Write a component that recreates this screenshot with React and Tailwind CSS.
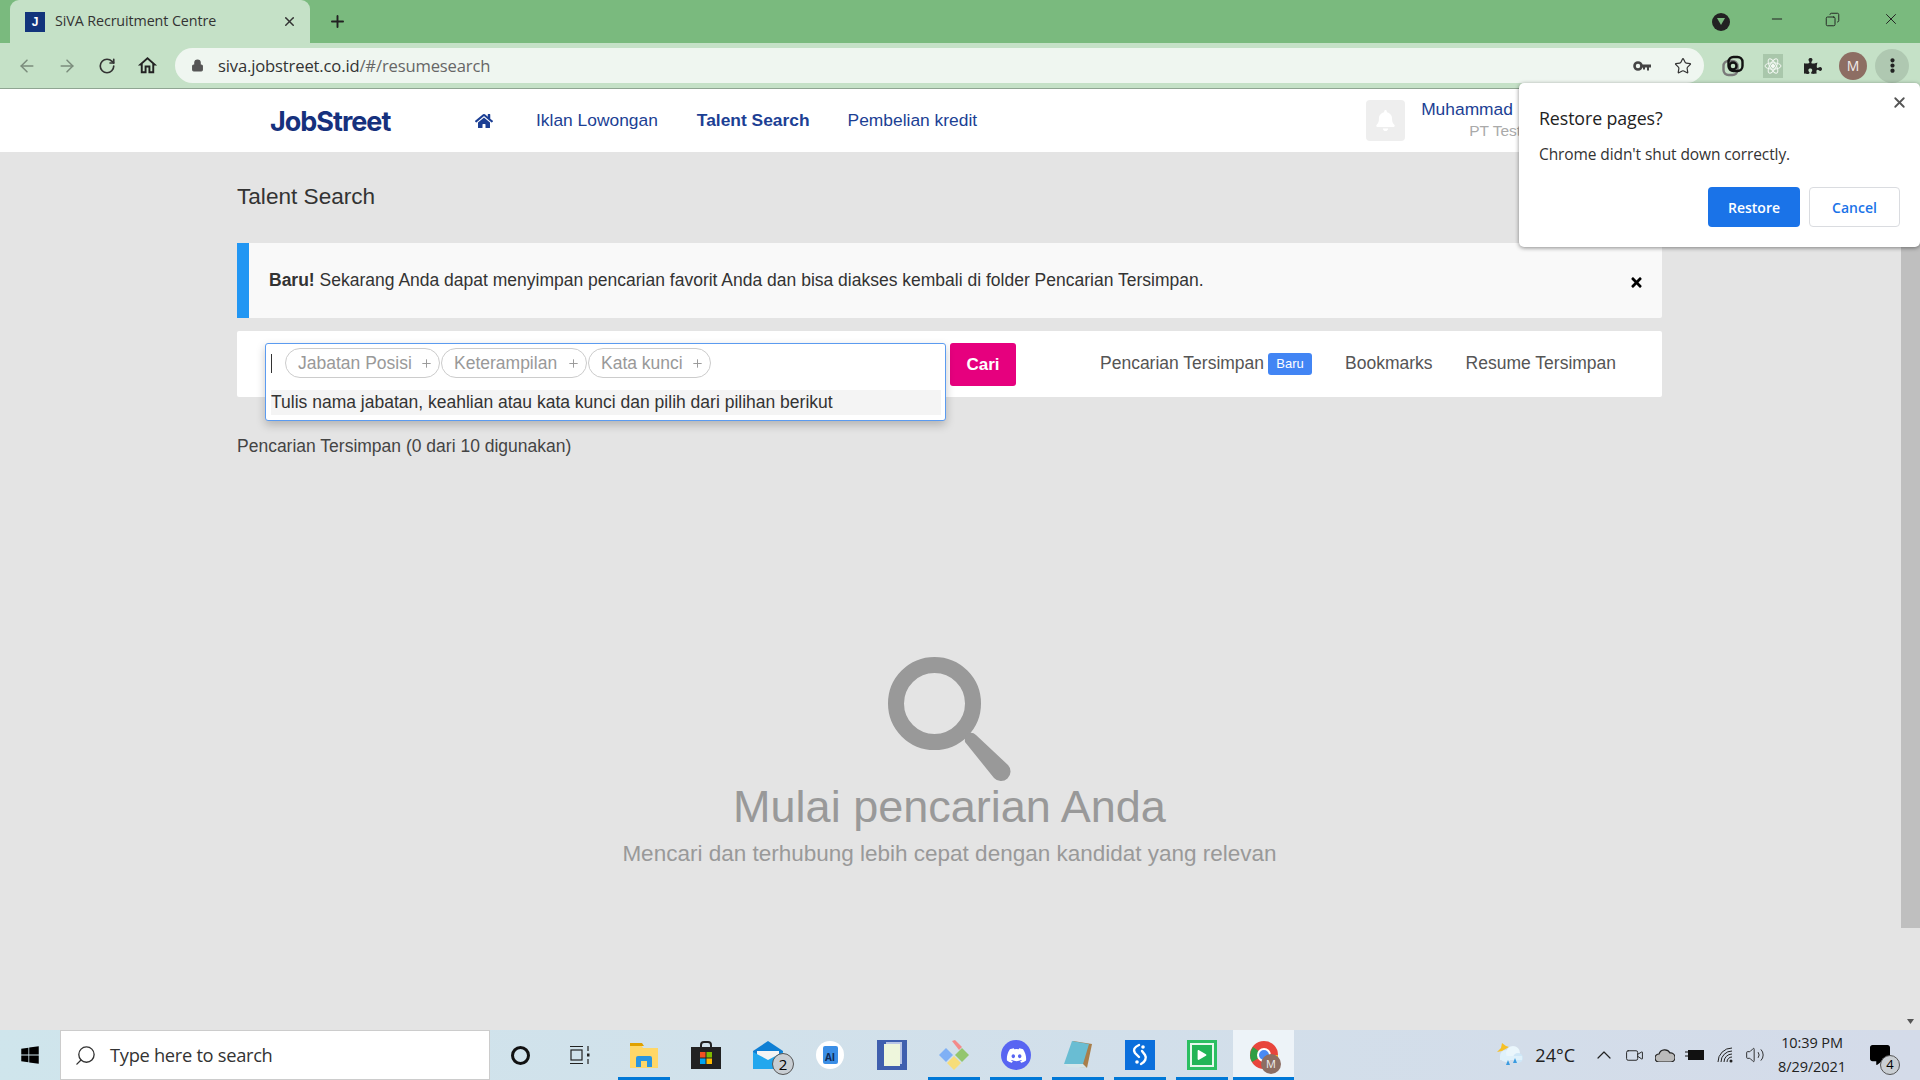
import { ArrowLeft, ArrowRight, RotateCw, Star, X, Plus, Minus, Lock, ChevronUp, Search, Volume2, Copy, Video } from 'lucide-react';
import { FaHome, FaBell, FaPuzzlePiece, FaWindows, FaDiscord, FaPlay, FaTimes, FaEllipsisV, FaCommentAlt } from 'react-icons/fa';
import { MdOutlineHome } from 'react-icons/md';

const sans = "font-['Liberation_Sans',Arial,sans-serif]";
const ui = "font-['Open_Sans','Noto_Sans',sans-serif]";

function Chip({ label, w }) {
  return (
    <div className={`flex h-[30px] items-center justify-between rounded-full border border-[#ccc] bg-white pl-[12px] pr-[6px] text-[17.5px] text-[#999] ${w}`}>
      <span>{label}</span>
      <Plus size={13} strokeWidth={1.8} />
    </div>
  );
}

function Slot({ children, mark, w = 'w-[62px]' }) {
  return (
    <div className={`relative flex h-full shrink-0 items-center justify-center ${w}`}>
      {children}
      {mark && <div className="absolute bottom-0 left-[5px] right-[5px] h-[3px] bg-[#0078d7]" />}
    </div>
  );
}

function Browser() {
  return (
    <>
      {/* Tab strip */}
      <div className="flex h-[43px] shrink-0 items-end bg-[#7aba7e] pl-[10px]">
        <div className={`flex h-[43px] w-[300px] items-center rounded-t-[9px] bg-[#c5e1c7] pl-[15px] pr-[13px] text-[14.3px] text-[#333] ${ui}`}>
          <div className={`mr-[10px] flex h-[20px] w-[20px] items-center justify-center bg-[#12347c] text-[12px] font-bold text-white ${sans}`}>J</div>
          <span className="-mt-[1px] flex-1 tracking-[-0.1px]">SiVA Recruitment Centre</span>
          <X size={15} strokeWidth={2.4} className="text-[#333]" />
        </div>
        <div className="flex h-[43px] w-[54px] items-center justify-center">
          <Plus size={19} strokeWidth={2.4} className="text-[#222]" />
        </div>
        <div className="flex-1" />
        <div className="flex h-[43px] items-center">
          <div className="mr-[22px] flex h-[18px] w-[18px] items-center justify-center rounded-full bg-[#222]">
            <svg width="8" height="7" viewBox="0 0 8 7"><path d="M0 0h8L4 7z" fill="#7aba7e" /></svg>
          </div>
          <div className="flex w-[50px] justify-center pb-[5px]"><Minus size={16} strokeWidth={1.5} className="text-[#222]" /></div>
          <div className="flex w-[60px] justify-center pb-[5px]"><Copy size={15} strokeWidth={1.5} className="-scale-x-100 text-[#222]" /></div>
          <div className="flex w-[58px] justify-center pb-[5px] pr-[1px]"><X size={18} strokeWidth={1.3} className="text-[#222]" /></div>
        </div>
      </div>
      {/* Toolbar */}
      <div className="flex h-[46px] shrink-0 items-center border-b border-[#8fa592] bg-[#c5e1c7]">
        <div className="flex w-[175px] items-center pl-[7px]">
          <div className="flex w-[40px] justify-center"><ArrowLeft size={20} strokeWidth={1.8} className="text-[#7b8c7c]" /></div>
          <div className="flex w-[40px] justify-center"><ArrowRight size={20} strokeWidth={1.8} className="text-[#7b8c7c]" /></div>
          <div className="flex w-[40px] justify-center"><RotateCw size={18} strokeWidth={2.2} className="text-[#333]" /></div>
          <div className="flex w-[40px] justify-center"><MdOutlineHome size={23} className="text-[#222]" /></div>
        </div>
        <div className={`flex h-[35px] w-[1529px] items-center rounded-full bg-[#eff6f0] pl-[16px] pr-[12px] text-[16.6px] ${ui}`}>
          <Lock size={13} fill="#555" strokeWidth={2} className="text-[#555]" />
          <span className="ml-[14px] mt-[1px] flex-1 tracking-[-0.15px] text-[#333]">siva.jobstreet.co.id<span className="text-[#666]">/#/resumesearch</span></span>
          <svg width="18" height="10" viewBox="0 0 18 10" className="mr-[23px]">
            <circle cx="5" cy="5" r="3.500" fill="none" stroke="#444" strokeWidth="2.6" />
            <path d="M8 3.500h10v3h-2v3h-2v-3h-2v2h-2v-2H8z" fill="#444" />
          </svg>
          <Star size={18} strokeWidth={1.6} className="text-[#333]" />
        </div>
        <div className="flex flex-1 items-center pl-[9px]">
          <div className="flex w-[40px] justify-center">
            <svg width="22" height="22" viewBox="0 0 22 22" fill="none" strokeWidth="2.4">
              <rect x="1.5" y="6" width="14" height="14" rx="5" stroke="#7a7a7a" />
              <rect x="6.5" y="2" width="14" height="14" rx="5" stroke="#111" />
              <circle cx="11" cy="11" r="3.5" stroke="#111" />
            </svg>
          </div>
          <div className="flex w-[40px] justify-center">
            <svg width="20" height="24" viewBox="0 0 20 24" fill="none" stroke="#f3f8f3" strokeWidth="1">
              <rect width="20" height="24" fill="#a9c7ab" stroke="none" />
              <ellipse cx="10" cy="12" rx="8" ry="3.2" />
              <ellipse cx="10" cy="12" rx="8" ry="3.2" transform="rotate(60 10 12)" />
              <ellipse cx="10" cy="12" rx="8" ry="3.2" transform="rotate(120 10 12)" />
              <circle cx="10" cy="12" r="1.6" fill="#f3f8f3" />
            </svg>
          </div>
          <div className="flex w-[40px] justify-center"><FaPuzzlePiece size={18} className="text-[#222]" /></div>
          <div className={`ml-[6px] flex h-[28px] w-[28px] items-center justify-center rounded-full bg-[#8d6e63] text-[14px] text-[#f2ece9] ${ui}`}>M</div>
          <div className="ml-[8px] flex h-[34px] w-[34px] items-center justify-center rounded-full bg-[#afc8b1]"><FaEllipsisV size={15} className="text-[#222]" /></div>
        </div>
      </div>
    </>
  );
}

function RestoreDialog() {
  return (
    <div className={`absolute left-[1519px] top-[83px] z-20 h-[164px] w-[401px] rounded-[5px] bg-white pl-[20px] pr-[20px] pt-[23px] shadow-[0_1px_4px_rgba(0,0,0,0.45)] ${ui}`}>
      <X size={17} strokeWidth={2.6} className="absolute right-[12px] top-[11px] text-[#555]" />
      <div className="text-[17.8px] leading-[24px] tracking-[-0.1px] text-[#222]">Restore pages?</div>
      <div className="mt-[14px] text-[15.5px] leading-[20px] tracking-[-0.1px] text-[#333]">Chrome didn't shut down correctly.</div>
      <div className="mt-[23px] flex justify-end gap-[9px] text-[14px] font-semibold">
        <div className="flex h-[40px] w-[92px] items-center justify-center rounded-[4px] bg-[#1a73e8] text-white">Restore</div>
        <div className="flex h-[40px] w-[91px] items-center justify-center rounded-[4px] border border-[#dadce0] bg-white text-[#1a73e8]">Cancel</div>
      </div>
    </div>
  );
}

function PageHeader() {
  return (
    <div className={`flex h-[63px] shrink-0 items-center bg-white pl-[270px] text-[17.4px] text-[#1c3f94] ${sans}`}>
      <div className="mt-[3px] w-[205px] font-['Inter',sans-serif] text-[27px] font-bold tracking-[-1px] text-[#16317d]">JobStreet</div>
      <FaHome size={18} className="mr-[43px] text-[#1c3f94]" />
      <span>Iklan Lowongan</span>
      <span className="ml-[39px] font-bold">Talent Search</span>
      <span className="ml-[38px]">Pembelian kredit</span>
      <div className="ml-[389px] flex h-[41px] w-[39px] items-center justify-center rounded-[4px] bg-[#eee]">
        <FaBell size={21} className="text-white" />
      </div>
      <div className="ml-[16px] w-[100px]">
        <div className="-mt-[3px] whitespace-nowrap leading-[20px]">Muhammad</div>
        <div className="mt-[3px] whitespace-nowrap pl-[48px] text-[15.5px] leading-[18px] text-[#aaa]">PT Test</div>
      </div>
    </div>
  );
}

function SearchCard() {
  return (
    <div className="flex h-[66px] items-start rounded-[2px] bg-white pl-[28px] pt-[12px]">
      <div className="relative h-[43px] w-[681px]">
        <div className="absolute inset-x-0 top-0 z-10 h-[78px] rounded-[3px] border border-[#5b9bf0] bg-white pl-[5px] pr-[4px] pt-[4px] shadow-[0_4px_10px_rgba(0,0,0,0.22)]">
          <div className="flex h-[30px] items-center">
            <div className="mr-[13px] h-[19px] w-px bg-[#333]" />
            <div className="flex gap-[1px]">
              <Chip label="Jabatan Posisi" w="w-[155px]" />
              <Chip label="Keterampilan" w="w-[146px]" />
              <Chip label="Kata kunci" w="w-[123px]" />
            </div>
          </div>
          <div className="mt-[12px] flex h-[25px] items-center bg-[#f4f4f4] text-[17.5px] text-[#333]">Tulis nama jabatan, keahlian atau kata kunci dan pilih dari pilihan berikut</div>
        </div>
      </div>
      <div className="ml-[4px] flex h-[43px] w-[66px] items-center justify-center rounded-[3px] bg-[#e6007e] text-[17px] font-bold text-white">Cari</div>
      <div className="flex h-[41px] flex-1 items-center pl-[84px] text-[17.5px] text-[#555]">
        <span>Pencarian Tersimpan</span>
        <span className="ml-[4px] flex h-[22px] w-[44px] items-center justify-center rounded-[3px] bg-[#4285f4] text-[13px] text-white">Baru</span>
        <span className="ml-[33px]">Bookmarks</span>
        <span className="ml-[33px]">Resume Tersimpan</span>
      </div>
    </div>
  );
}

function Content() {
  return (
    <div className={`min-w-0 flex-1 bg-[#e4e4e4] pl-[237px] pr-[239px] ${sans}`}>
      <div className="flex h-[91px] items-center pb-[2px] text-[22.6px] text-[#333]">Talent Search</div>
      <div className="flex h-[75px] rounded-[2px] bg-[#f9f9f9]">
        <div className="h-full w-[12px] bg-[#2196f3]" />
        <div className="flex-1 pl-[20px] pt-[27px] text-[17.5px] leading-[20px] text-[#333]">
          <b>Baru!</b> Sekarang Anda dapat menyimpan pencarian favorit Anda dan bisa diakses kembali di folder Pencarian Tersimpan.
        </div>
        <FaTimes size={15} className="mr-[18px] mt-[32px] text-black" />
      </div>
      <div className="mt-[13px]"><SearchCard /></div>
      <div className="mt-[39px] text-[17.5px] leading-[20px] text-[#444]">Pencarian Tersimpan (0 dari 10 digunakan)</div>
      <div className="mt-[201px] flex flex-col items-center text-[#999]">
        <svg width="126" height="126" viewBox="0 0 126 126" fill="none" className="translate-x-[1px]">
          <circle cx="46.500" cy="46.500" r="38.500" stroke="#999" strokeWidth="16" />
          <path d="M77 85Q76 78 81 76Q85 75 88 78L120 108A9.500 9.500 0 0 1 106 121Z" fill="#999" />
        </svg>
        <div className="-mt-[2px] text-[45px] leading-[52px]">Mulai pencarian Anda</div>
        <div className="mt-[6px] text-[22.5px] leading-[30px]">Mencari dan terhubung lebih cepat dengan kandidat yang relevan</div>
      </div>
    </div>
  );
}

function Taskbar() {
  return (
    <div className={`flex h-[50px] shrink-0 items-center bg-gradient-to-r from-[#cfe5ec] to-[#d4dbe9] text-[#222] ${ui}`}>
      <div className="flex h-full w-[60px] items-center justify-center"><FaWindows size={20} className="text-black" /></div>
      <div className="flex h-full w-[430px] items-center border border-[#ccc] bg-white pl-[13px] text-[18.3px] text-[#333]">
        <Search size={23} strokeWidth={1.4} className="-scale-x-100" />
        <span className="ml-[13px] tracking-[-0.3px]">Type here to search</span>
      </div>
      <div className="flex h-full w-[60px] items-center justify-center"><div className="h-[19px] w-[19px] rounded-full border-[3px] border-[#111]" /></div>
      <div className="flex h-full w-[63px] items-center justify-center pr-[3px]">
        <svg width="20" height="20" viewBox="0 0 20 20" fill="none" stroke="#222" strokeWidth="1.2">
          <path d="M0 1.5h13M0 18.5h13" />
          <rect x="1" y="5" width="11" height="10" />
          <path d="M18 1v5M18 14v5" />
          <rect x="17" y="8.5" width="2.5" height="3" fill="#222" stroke="none" />
        </svg>
      </div>
      <Slot mark>
        <svg width="28" height="25" viewBox="0 0 28 25">
          <path d="M0 2h11l2 3h15v20H0z" fill="#ffd767" />
          <path d="M0 0h12l2 3H0z" fill="#e0a100" />
          <path d="M6 24V15a2 2 0 0 1 2-2h12a2 2 0 0 1 2 2v9h-5v-6h-6v6z" fill="#2a95e0" />
        </svg>
      </Slot>
      <Slot>
        <svg width="30" height="28" viewBox="0 0 30 28">
          <path d="M10 7V4a3 3 0 0 1 3-3h4a3 3 0 0 1 3 3v3" fill="none" stroke="#222" strokeWidth="2" />
          <rect y="6" width="30" height="22" fill="#222" />
          <rect x="9" y="11" width="5.500" height="5.500" fill="#f25022" />
          <rect x="15.500" y="11" width="5.500" height="5.500" fill="#7fba00" />
          <rect x="9" y="17.500" width="5.500" height="5.500" fill="#00a4ef" />
          <rect x="15.500" y="17.500" width="5.500" height="5.500" fill="#ffb900" />
        </svg>
      </Slot>
      <Slot>
        <div className="relative">
          <svg width="30" height="28" viewBox="0 0 30 28">
            <path d="M0 10L15 0l15 10v18H0z" fill="#0f7fd4" />
            <path d="M4 10h22v8l-11 6-11-6z" fill="#f4f4f4" />
            <path d="M0 11l15 8 15-8v17H0z" fill="#22a7ee" />
          </svg>
          <div className="absolute -bottom-[6px] -right-[11px] flex h-[22px] w-[22px] items-center justify-center rounded-full border border-[#555] bg-[#c9ced3] text-[15px] text-black">2</div>
        </div>
      </Slot>
      <Slot>
        <div className="flex h-[28px] w-[28px] items-center justify-center rounded-full bg-white">
          <div className="flex h-[18px] w-[15px] items-end justify-center rounded-[2px] bg-[#3a8ee6] text-[10px] font-bold leading-[14px] text-[#102a55]">AI</div>
        </div>
      </Slot>
      <Slot>
        <div className="flex h-[30px] w-[30px] items-center justify-center bg-[#3f5fae]">
          <div className="h-[22px] w-[16px] bg-[#eef6dc] shadow-[2px_-2px_0_#b9c6e6]" />
        </div>
      </Slot>
      <Slot mark>
        <svg width="30" height="30" viewBox="0 0 30 30">
          <path d="M7 8l7 7-7 7-7-7z" fill="#7fb0f5" />
          <path d="M15 16l7 7-7 7-7-7z" fill="#f7dd7a" />
          <path d="M23 8l7 7-7 7-7-7z" fill="#93c66e" />
          <path d="M13 1l3-1 7 7-3 3z" fill="#f38a8a" />
        </svg>
      </Slot>
      <Slot mark>
        <div className="flex h-[30px] w-[30px] items-center justify-center rounded-full bg-[#5865f2]"><FaDiscord size={21} className="text-white" /></div>
      </Slot>
      <Slot mark>
        <svg width="28" height="30" viewBox="0 0 28 30">
          <path d="M9 1l19 3-5 24-8-1z" fill="#a97e4a" />
          <path d="M8 1l17 3-6 20H0z" fill="#69bdd3" />
          <path d="M0 24h19l4 4-19-1z" fill="#d5e6ea" />
        </svg>
      </Slot>
      <Slot mark>
        <svg width="30" height="30" viewBox="0 0 30 30" fill="none">
          <rect width="30" height="30" fill="#0b6fdc" />
          <path d="M14 5c-5 2-6 5-4 8l4 4" stroke="#fff" strokeWidth="2.4" strokeLinecap="round" />
          <path d="M17 11l3 4c2 3 0 7-4 9" stroke="#fff" strokeWidth="2.4" strokeLinecap="round" />
          <circle cx="18" cy="7" r="1.800" fill="#fff" />
          <circle cx="12" cy="22" r="1.800" fill="#fff" />
        </svg>
      </Slot>
      <Slot mark>
        <div className="flex h-[30px] w-[30px] items-center justify-center border-[3px] border-[#2cbf62] bg-[#e7f8ec]">
          <div className="flex h-[20px] w-[20px] items-center justify-center bg-[#22b556]"><FaPlay size={10} className="text-white" /></div>
        </div>
      </Slot>
      <div className="relative flex h-full w-[61px] shrink-0 items-center justify-center bg-[#edf3f8]">
        <svg width="30" height="30" viewBox="0 0 30 30">
          <circle cx="15" cy="15" r="14" fill="#e8453c" />
          <path d="M15 15L3 22A14 14 0 0 1 4 7z" fill="#2f9e44" />
          <path d="M15 15h14a14 14 0 0 1-9 13z" fill="#f9bb2d" />
          <circle cx="15" cy="15" r="6" fill="#4a8af4" stroke="#fff" strokeWidth="2" />
        </svg>
        <div className="absolute left-[28px] top-[24px] flex h-[20px] w-[20px] items-center justify-center rounded-full bg-[#8d6e63] text-[11px] text-[#eee]">M</div>
        <div className="absolute inset-x-0 bottom-0 h-[3px] bg-[#0078d7]" />
      </div>
      <div className="flex-1" />
      <svg width="27" height="26" viewBox="0 0 27 26" className="shrink-0">
        <path d="M5 9l-5 1 4-4 1-5 4 3 3 1z" fill="#f6c026" />
        <circle cx="9" cy="14" r="6" fill="#dff1fb" /><circle cx="16" cy="11" r="7" fill="#eaf6fc" /><circle cx="21" cy="16" r="5" fill="#cfe7f7" />
        <path d="M3 14h22v4H3z" fill="#dff1fb" />
        <path d="M11 18l2 5-4 0zM18 16l2 5-4 0z" fill="#3a9be0" />
      </svg>
      <span className="ml-[11px] text-[18px]">24°C</span>
      <ChevronUp size={24} strokeWidth={1.2} className="ml-[17px]" />
      <Video size={19} strokeWidth={1.2} className="ml-[9px]" />
      <svg width="20" height="13" viewBox="0 0 20 13" className="ml-[11px]"><path d="M4 13a4 4 0 0 1 0-8 6 6 0 0 1 11-1 4.500 4.500 0 0 1 1 9z" fill="#bbb" stroke="#222" strokeWidth="1.2" /></svg>
      <svg width="20" height="12" viewBox="0 0 20 12" className="ml-[10px]"><path d="M0 3h3M0 7h3" stroke="#111" /><rect x="3" y="1" width="16" height="10" fill="#111" /></svg>
      <svg width="17" height="16" viewBox="0 0 17 16" fill="none" stroke="#222" strokeWidth="1" className="ml-[12px]"><path d="M1 15A14 14 0 0 1 15 1M4 15A11 11 0 0 1 15 4M7 15a8 8 0 0 1 8-8M10 15a5 5 0 0 1 5-5" /><circle cx="14" cy="14" r="1.500" fill="#222" stroke="none" /></svg>
      <Volume2 size={20} strokeWidth={1.1} className="ml-[11px]" />
      <div className="ml-[9px] w-[76px] whitespace-nowrap text-center text-[14.500px] leading-[24px] tracking-[-0.1px]">
        <div>10:39 PM</div>
        <div>8/29/2021</div>
      </div>
      <div className="relative ml-[20px] mr-[30px] shrink-0">
        <FaCommentAlt size={20} className="text-black" />
        <div className="absolute -bottom-[10px] -right-[10px] flex h-[20px] w-[20px] items-center justify-center rounded-full border border-[#555] bg-[#c9ced3] text-[13px] text-black">4</div>
      </div>
    </div>
  );
}

export default function App() {
  return (
    <div className="relative flex h-[1080px] w-[1920px] flex-col overflow-hidden bg-[#e4e4e4]">
      <Browser />
      <RestoreDialog />
      <div className="flex min-h-0 flex-1 flex-col">
        <PageHeader />
        <div className="flex min-h-0 flex-1">
          <Content />
          <div className="flex w-[19px] shrink-0 flex-col bg-[#e4e4e4]">
            <div className="h-[776px] bg-[#bfbfbf]" />
            <div className="flex-1" />
            <svg width="19" height="12" viewBox="0 0 19 12" className="mb-[2px]"><path d="M6 3h7l-3.500 5z" fill="#555" /></svg>
          </div>
        </div>
      </div>
      <Taskbar />
    </div>
  );
}
